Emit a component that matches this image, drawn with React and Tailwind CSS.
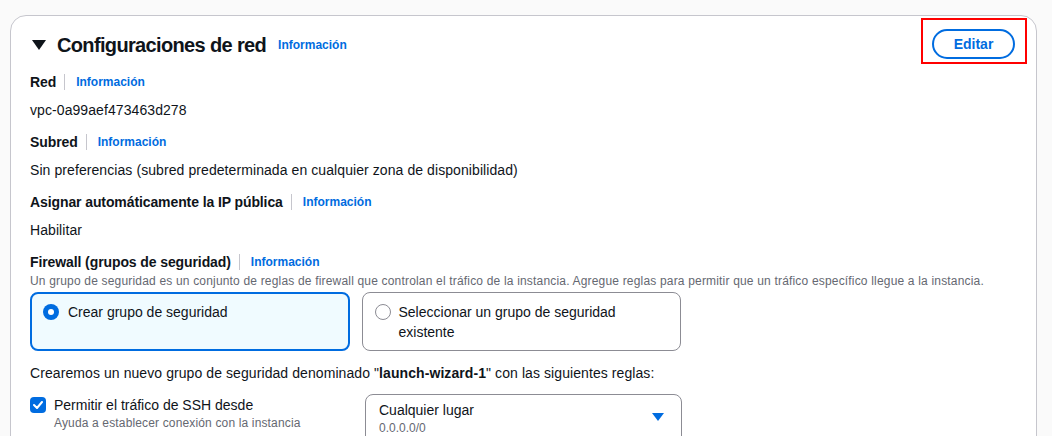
import React from 'react';

const Info = () => (
  <span className="text-[12px] font-bold leading-5 text-[#006ce0]">Información</span>
);

const Label = ({ children }) => (
  <div className="flex h-5 items-center">
    <span className="text-[14px] font-bold leading-5 tracking-[-0.1px]">{children}</span>
    <span className="ml-[8px] mr-[11px] h-4 w-px bg-[#c6c6cd]" />
    <Info />
  </div>
);

const Value = ({ children }) => <div className="mt-2 text-[14px] leading-5 tracking-[0.08px]">{children}</div>;

export default function App() {
  return (
    <div className="h-[436px] overflow-hidden bg-[#fafafa] pl-[10px] pt-[15px] font-['Liberation_Sans',sans-serif] text-[#0f141a]">
      <div className="h-[460px] w-[1027px] rounded-[16px] border border-[#c6c6cd] bg-white px-[19px]">
        <div className="flex h-[48px] items-start justify-between">
          <div className="mt-[17px] flex items-center">
            <svg width="14" height="10" viewBox="0 0 14 10" className="ml-[2px] mr-[11px]">
              <path d="M0 0h14L7 10z" fill="#0f141a" />
            </svg>
            <h2 className="mr-[12px] text-[20px] font-bold leading-6 tracking-[-0.65px]">Configuraciones de red</h2>
            <Info />
          </div>
          <div className="mr-[-10px] mt-[2px] border-2 border-[#ff0000] pb-[3px] pl-[9px] pr-[10px] pt-[9px]">
            <button className="h-[30px] w-[83px] rounded-full border-2 border-[#006ce0] text-[14px] font-bold text-[#006ce0]">
              Editar
            </button>
          </div>
        </div>

        <div className="pt-2">
          <Label>Red</Label>
          <Value>vpc-0a99aef473463d278</Value>
          <div className="mt-3"><Label>Subred</Label></div>
          <Value>Sin preferencias (subred predeterminada en cualquier zona de disponibilidad)</Value>
          <div className="mt-3"><Label>Asignar automáticamente la IP pública</Label></div>
          <Value>Habilitar</Value>
          <div className="mt-3"><Label>Firewall (grupos de seguridad)</Label></div>
          <div className="mt-[1px] text-[12px] leading-4 tracking-[0.18px] text-[#656871]">
            Un grupo de seguridad es un conjunto de reglas de firewall que controlan el tráfico de la instancia. Agregue reglas para permitir que un tráfico específico llegue a la instancia.
          </div>

          <div className="mt-[3px] grid w-[651px] grid-cols-2 gap-[12px]">
            <div className="flex items-start gap-[9px] rounded-[8px] border-2 border-[#006ce0] bg-[#f0fbff] px-[11px] pb-[8px] pt-[8px]">
              <span className="mt-[2px] flex h-4 w-4 shrink-0 items-center justify-center rounded-full bg-[#006ce0]">
                <span className="h-[6px] w-[6px] rounded-full bg-white" />
              </span>
              <span className="text-[14px] leading-5">Crear grupo de seguridad</span>
            </div>
            <div className="flex items-start gap-[8px] rounded-[8px] border border-[#8c8c94] px-[12px] pb-[8px] pt-[9px]">
              <span className="mt-[2px] h-4 w-4 shrink-0 rounded-full border border-[#8c8c94] bg-white" />
              <span className="text-[14px] leading-5">Seleccionar un grupo de seguridad<br />existente</span>
            </div>
          </div>

          <div className="mt-3 text-[14px] leading-5 tracking-[0.08px]">
            Crearemos un nuevo grupo de seguridad denominado "<b>launch-wizard-1</b>" con las siguientes reglas:
          </div>

          <div className="mt-[11px] flex">
            <div className="flex w-[335px] items-start gap-2 pt-[1px]">
              <span className="mt-[2px] flex h-4 w-4 shrink-0 items-center justify-center rounded-[4px] bg-[#006ce0]">
                <svg width="10" height="8" viewBox="0 0 10 8">
                  <path d="M1 4l3 3 5-6" fill="none" stroke="white" strokeWidth="2" strokeLinecap="round" strokeLinejoin="round" />
                </svg>
              </span>
              <div>
                <div className="text-[14px] leading-5">Permitir el tráfico de SSH desde</div>
                <div className="text-[12px] leading-4 tracking-[0.15px] text-[#656871]">Ayuda a establecer conexión con la instancia</div>
              </div>
            </div>
            <div className="flex h-[50px] w-[317px] items-start justify-between rounded-[8px] border border-[#8c8c94] pl-[13px] pr-[17px] pt-[5px]">
              <div>
                <div className="text-[14px] leading-5">Cualquier lugar</div>
                <div className="text-[12px] leading-4 text-[#656871]">0.0.0.0/0</div>
              </div>
              <svg width="12" height="8" viewBox="0 0 12 8" className="mt-[13px]">
                <path d="M0 0h12L6 8z" fill="#006ce0" />
              </svg>
            </div>
          </div>
        </div>
      </div>
    </div>
  );
}
